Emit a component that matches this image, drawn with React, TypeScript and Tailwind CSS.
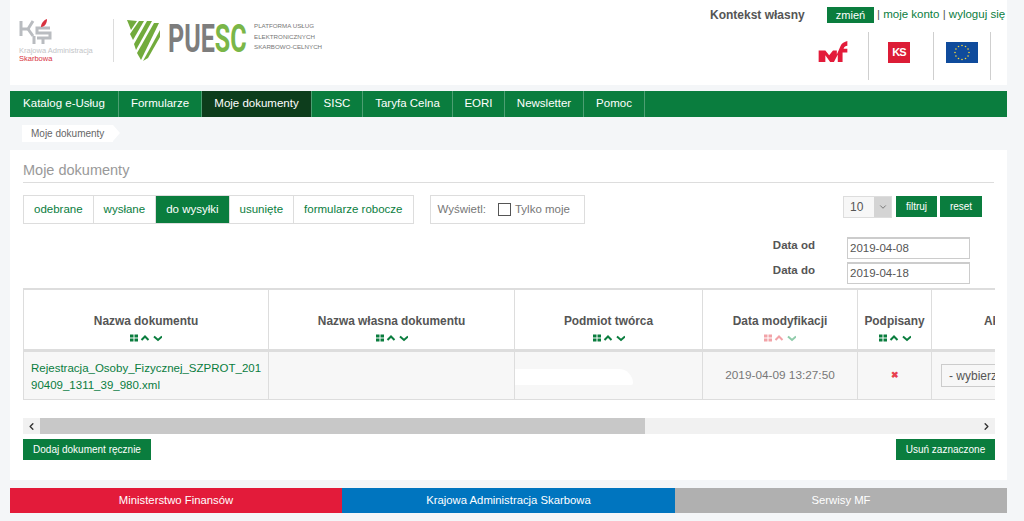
import { ChevronLeft, ChevronRight, ChevronDown } from 'lucide-react';

const navItems = [
  { label: 'Katalog e-Usług', width: 'w-[109px]' },
  { label: 'Formularze', width: 'w-[83px]' },
  { label: 'Moje dokumenty', width: 'w-[110px]' },
  { label: 'SISC', width: 'w-[51px]' },
  { label: 'Taryfa Celna', width: 'w-[90px]' },
  { label: 'EORI', width: 'w-[52px]' },
  { label: 'Newsletter', width: 'w-[79px]' },
  { label: 'Pomoc', width: 'w-[61px]' },
];
const tabs = ['odebrane', 'wysłane', 'do wysyłki', 'usunięte', 'formularze robocze'];

const columns = [
  { title: 'Nazwa dokumentu', width: 'w-[245px]' },
  { title: 'Nazwa własna dokumentu', width: 'w-[246px]' },
  { title: 'Podmiot twórca', width: 'w-[188px]' },
  { title: 'Data modyfikacji', width: 'w-[155px]', active: true },
  { title: 'Podpisany', width: 'w-[74px]' },
];

const SortIcons = ({ active }: { active?: boolean }) => (
  <svg width="32" height="8" viewBox="0 0 32 8" className="mx-auto mt-[6px] block">
    <g fill={active ? '#f2a3a8' : '#0a7d3e'}>
      <rect x="0" y="0.5" width="3.5" height="3" />
      <rect x="4.5" y="0.5" width="3.5" height="3" />
      <rect x="0" y="4.5" width="3.5" height="3" />
      <rect x="4.5" y="4.5" width="3.5" height="3" />
    </g>
    <path d="M11.5 6 L15 2.5 L18.5 6" fill="none" stroke={active ? '#f2a3a8' : '#0a7d3e'} strokeWidth="2" />
    <path d="M24 2.5 L28 6 L32 2.5" fill="none" stroke={active ? '#8fcbaa' : '#0a7d3e'} strokeWidth="2" />
  </svg>
);

const PuescLogo = () => (
  <svg width="34" height="42" viewBox="0 0 34 42">
    <path d="M0 0 L10 1 L4 10 Z" fill="#72ab3c" />
    <path d="M12 1 L17 1 L6 20 L3 14 Z" fill="#72ab3c" />
    <path d="M20 1 L25 1 L9 30 L7 24 Z" fill="#72ab3c" />
    <path d="M27 3 L32 3 L14 40 L10 33 Z" fill="#72ab3c" />
    <path d="M33 10 L33 17 L21 38 L16 41 Z" fill="#72ab3c" />
  </svg>
);

const KasMark = () => (
  <svg width="34" height="25" viewBox="0 0 34 25">
    <g fill="none" stroke="#b9bcc0" strokeWidth="3">
      <path d="M2 2 V17" />
      <path d="M2 10 H9 L14 2" />
      <path d="M9 10 L14 17" />
      <path d="M31 9 H18 V14 H31 V19 H18" />
      <path d="M15 17 V25 M24 19 V25" />
    </g>
    <path d="M22 8 C22 4 25 1 28 0 C28 4 26 8 22 8 Z" fill="#d8323f" />
  </svg>
);

const MfLogo = () => (
  <svg width="30" height="22" viewBox="0 0 30 23">
    <path d="M0 10 H7 L11 15 L15 10 H19 V14 L23 5 C24 2 27 1 30 0 V5 C28 5 27 6 26 8 H30 V12 H25 V22 H20 V14 L16 22 H12 L7 15 V22 H0 Z" fill="#e31b3a" />
  </svg>
);

const EuFlag = () => {
  const stars = Array.from({ length: 12 }, (_, i) => {
    const a = (i * Math.PI) / 6;
    return { x: 16 + 7 * Math.cos(a), y: 10.5 + 7 * Math.sin(a) };
  });
  return (
    <svg width="32" height="21" viewBox="0 0 32 21">
      <rect width="32" height="21" fill="#0f4b9c" />
      {stars.map((s, i) => (
        <circle key={i} cx={s.x} cy={s.y} r="0.8" fill="#f4d63a" />
      ))}
    </svg>
  );
};

export default function App() {
  return (
    <div className="h-[521px] w-[1024px] overflow-hidden bg-[#f4f6f8] pl-[10px] pr-[17px] font-['Liberation_Sans',Arial,sans-serif] text-[12px] text-[#555]">
      {/* header */}
      <div className="flex h-[85px] justify-between bg-white">
        <div className="flex items-start pl-[9px] pt-[19px]">
          <div className="w-[86px]">
            <KasMark />
            <div className="mt-[3px] whitespace-nowrap text-[7.5px] leading-[8px] text-[#c3c5c8]">Krajowa Administracja</div>
            <div className="text-[7.5px] leading-[7px] text-[#d8323f]">Skarbowa</div>
          </div>
          <div className="ml-[8px] h-[43px] w-px bg-[#dcdcdc]" />
          <div className="ml-[13px] mt-[1px]">
            <PuescLogo />
          </div>
          <div className="ml-[7px] w-[78px] origin-left scale-x-[0.66] whitespace-nowrap font-['Roboto',sans-serif] text-[38px] font-bold leading-[40px]">
            <span className="text-[#7d7d7d]">PUE</span>
            <span className="text-[#7ab648]">SC</span>
          </div>
          <div className="ml-[8px] mt-[2px] whitespace-nowrap text-[6.2px] leading-[10.5px] text-[#777]">
            <div>PLATFORMA USŁUG</div>
            <div>ELEKTRONICZNYCH</div>
            <div>SKARBOWO-CELNYCH</div>
          </div>
        </div>
        <div className="flex w-[297px] flex-col">
          <div className="flex h-[32px] items-start pt-[7px]">
            <div className="w-[117px] pt-[2px] text-[12px] font-bold leading-[13px] text-[#555]">Kontekst własny</div>
            <div className="flex h-[16px] w-[47px] items-center justify-center bg-[#0a7d3e] text-[11px] text-white">zmień</div>
            <div className="ml-[3px] whitespace-nowrap text-[11.5px] leading-[14px] text-[#0a7d3e]">
              <span className="text-[#555]">|</span> moje konto <span className="text-[#555]">|</span> wyloguj się
            </div>
          </div>
          <div className="flex h-[48px] items-center justify-end pr-[16px]">
            <div className="flex h-full w-[60px] items-center justify-center border-r border-[#cfcfcf] pb-[8px] pr-[12px]"><MfLogo /></div>
            <div className="flex h-full w-[65px] items-center justify-center border-r border-[#cfcfcf] pb-[8px] pr-[4px]">
              <div className="flex h-[21px] w-[22px] items-center justify-center bg-[#dc1c36] text-[11px] font-bold leading-none tracking-[-1px] text-white">KS</div>
            </div>
            <div className="flex h-full w-[57px] items-center justify-center border-r border-[#cfcfcf] pb-[8px]"><EuFlag /></div>
          </div>
        </div>
      </div>

      {/* nav */}
      <div className="mt-[6px] flex h-[26px] bg-[#0a7d3e]">
        {navItems.map((item) => (
          <div
            key={item.label}
            className={`flex items-center justify-center border-r border-[#4c9f72] text-[11.5px] ${item.width} ${
              item.label === 'Moje dokumenty' ? 'bg-[#0d3d1c] text-white' : 'text-white'
            }`}
          >
            {item.label}
          </div>
        ))}
      </div>

      {/* breadcrumb */}
      <div className="mt-[8px] flex h-[17px] pl-[12px]">
        <div className="flex items-center bg-white pl-[9px] pr-[9px] text-[10px] text-[#666]">Moje dokumenty</div>
        <div className="h-0 w-0 border-y-[8.5px] border-l-[7px] border-y-transparent border-l-white" />
      </div>

      {/* content */}
      <div className="mt-[8px] h-[330px] bg-white px-[13px] pt-[12px]">
        <div className="h-[21px] border-b border-[#ddd] text-[14.5px] leading-[16px] text-[#999]">Moje dokumenty</div>

        <div className="mt-[12px] flex h-[29px] items-start justify-between pr-[12px]">
          <div className="flex">
            <div className="flex h-[29px] border border-[#ddd]">
              {tabs.map((t) => (
                <div
                  key={t}
                  className={`flex items-center border-r border-[#ddd] px-[10px] text-[11.5px] last:border-r-0 ${
                    t === 'do wysyłki' ? 'bg-[#0a7d3e] text-white' : 'text-[#0a7d3e]'
                  }`}
                >
                  {t}
                </div>
              ))}
            </div>
            <div className="ml-[16px] flex h-[29px] w-[155px] items-center border border-[#ddd] pl-[7px] text-[11.5px] text-[#777]">
              Wyświetl:
              <span className="ml-[12px] h-[13px] w-[13px] border border-[#555]" />
              <span className="ml-[4px]">Tylko moje</span>
            </div>
          </div>
          <div className="mt-px flex h-[22px] items-start">
            <div className="flex h-[22px] w-[49px] items-center justify-between border border-[#ddd] bg-[#f7f7f7] pl-[6px] text-[12px]">
              10
              <span className="flex h-full w-[17px] items-center justify-center bg-[#d4d4d4]">
                <ChevronDown size={10} color="#666" />
              </span>
            </div>
            <div className="ml-[4px] flex h-[21px] w-[41px] items-center justify-center bg-[#0a7d3e] text-[10px] text-white">filtruj</div>
            <div className="ml-[3px] flex h-[21px] w-[42px] items-center justify-center bg-[#0a7d3e] text-[10px] text-white">reset</div>
          </div>
        </div>

        <div className="mt-[13px] flex flex-col items-end gap-[3px] pr-[24px]">
          {[
            ['Data od', '2019-04-08'],
            ['Data do', '2019-04-18'],
          ].map(([label, value]) => (
            <div key={label} className="flex h-[22px] items-center">
              <span className="mr-[32px] -mt-[5px] text-[11.5px] font-bold text-[#555]">{label}</span>
              <span className="flex h-[22px] w-[123px] items-center border border-t-2 border-[#ccc] pl-[2px] text-[11.5px] text-[#555]">{value}</span>
            </div>
          ))}
        </div>

        {/* table */}
        <div className="mt-[4px] w-[972px] overflow-hidden">
          <div className="flex h-[64px] w-[1100px] border-y border-t-2 border-b-[3px] border-[#ddd]">
            {columns.map((c) => (
              <div key={c.title} className={`${c.width} shrink-0 border-l border-[#ddd] pt-[24px] text-center`}>
                <div className="text-[11.9px] font-bold leading-[14px] text-[#555]">{c.title}</div>
                <SortIcons active={c.active} />
              </div>
            ))}
            <div className="w-[170px] shrink-0 border-l border-[#ddd] pl-[52px] pt-[24px] text-[11.9px] font-bold leading-[14px]">Akcje</div>
          </div>
          <div className="flex h-[48px] w-[1100px] border-b border-[#ddd] bg-[#f7f7f7]">
            <div className="w-[245px] shrink-0 border-l border-[#ddd] pl-[7px] pr-[6px] pt-[8px] text-[11.5px] leading-[17px] text-[#0a7d3e] [overflow-wrap:anywhere]">
              Rejestracja_Osoby_Fizycznej_SZPROT_20190409_1311_39_980.xml
            </div>
            <div className="w-[246px] shrink-0 border-l border-[#ddd]" />
            <div className="flex w-[188px] shrink-0 items-center border-l border-[#ddd]">
              <div className="mt-[3px] h-[16px] w-[118px] rounded-tr-[60px] rounded-br-[8px] bg-white" />
            </div>
            <div className="flex w-[155px] shrink-0 items-center justify-center border-l border-[#ddd] text-[11.8px] text-[#777]">2019-04-09 13:27:50</div>
            <div className="flex w-[74px] shrink-0 items-center justify-center border-l border-[#ddd] text-[9px] font-bold text-[#e8404f]">✖</div>
            <div className="flex w-[170px] shrink-0 items-center border-l border-[#ddd] pl-[9px]">
              <span className="flex h-[23px] w-[120px] items-center border border-[#ccc] bg-[#f7f7f7] pl-[7px] text-[#555]">- wybierz -</span>
            </div>
          </div>
        </div>

        {/* scrollbar */}
        <div className="mt-[18px] flex h-[16px] w-[972px] items-center bg-[#f1f1f1]">
          <span className="flex w-[17px] justify-center"><ChevronLeft size={11} color="#333" strokeWidth={3} /></span>
          <div className="h-full w-[605px] bg-[#c8c8c8]" />
          <span className="ml-auto flex w-[17px] justify-center"><ChevronRight size={11} color="#333" strokeWidth={3} /></span>
        </div>

        <div className="mt-[5px] flex w-[972px] justify-between">
          <div className="flex h-[21px] w-[128px] items-center justify-center bg-[#0a7d3e] text-[10px] text-white">Dodaj dokument ręcznie</div>
          <div className="flex h-[21px] w-[99px] items-center justify-center bg-[#0a7d3e] text-[10px] text-white">Usuń zaznaczone</div>
        </div>
      </div>

      {/* footer */}
      <div className="mt-[8px] flex h-[25px] text-[11.3px] text-white">
        <div className="flex w-[332px] items-center justify-center bg-[#e31b3a]">Ministerstwo Finansów</div>
        <div className="flex w-[333px] items-center justify-center bg-[#0075bf]">Krajowa Administracja Skarbowa</div>
        <div className="flex w-[332px] items-center justify-center bg-[#b0b0b0]">Serwisy MF</div>
      </div>
    </div>
  );
}
